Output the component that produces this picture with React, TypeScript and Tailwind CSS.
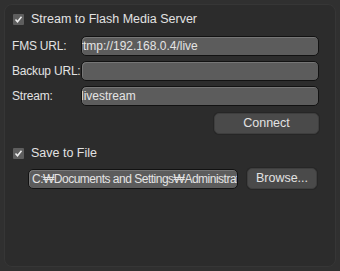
import React from 'react';

const font = { fontFamily: '"Liberation Sans", Arial, sans-serif' };

function Check({ label }: { label: string }) {
  return (
    <div className="flex items-center gap-[7px] h-[14px]">
      <div className="w-[11px] h-[11px] bg-[#5e5e5e] rounded-[1px] flex items-center justify-center">
        <svg width="9" height="9" viewBox="0 0 9 9">
          <path d="M1.5 4.5 L3.5 6.8 L7.5 1.8" stroke="#f0f0f0" strokeWidth="1.5" fill="none" />
        </svg>
      </div>
      <span className="text-[12.5px] text-[#e2e2e2] leading-none whitespace-nowrap">{label}</span>
    </div>
  );
}

function Field({ value, offset = 0, tight = false }: { value: string; offset?: number; tight?: boolean }) {
  return (
    <div className="h-[20px] w-full rounded-[5px] bg-[#5c5c5c] border border-[#121212] shadow-[inset_1px_1px_0_#767676] overflow-hidden flex items-center">
      <span
        className={`text-[12px] text-[#e4e4e4] whitespace-nowrap leading-none ${tight ? 'tracking-[-0.5px]' : ''}`}
        style={{ marginLeft: offset }}
      >
        {value}
      </span>
    </div>
  );
}

function Button({ label, w }: { label: string; w: string }) {
  return (
    <div
      className={`${w} h-[21px] shrink-0 rounded-[5px] bg-[#4a4a4a] border border-[#3e3e3e] shadow-[0_0_0_1px_#262626] flex items-center justify-center text-[12.5px] text-[#e2e2e2]`}
    >
      {label}
    </div>
  );
}

function Row({ label, value, offset }: { label: string; value: string; offset?: number }) {
  return (
    <div className="flex items-center">
      <span className="w-[69px] shrink-0 whitespace-nowrap text-[12px] tracking-[-0.2px] text-[#e2e2e2]">{label}</span>
      <div className="flex-1">
        <Field value={value} offset={offset} />
      </div>
    </div>
  );
}

export default function App() {
  return (
    <div className="w-[340px] h-[271px] bg-[#303030] p-[4px]" style={font}>
      <div className="h-full rounded-[8px] bg-[#2c2c2c] border border-[#363636] pl-[7px] pr-[16px] pt-[7px]">
        <div className="pl-[1px]">
          <Check label="Stream to Flash Media Server" />
        </div>
        <div className="mt-[10px] flex flex-col gap-[5px]">
          <Row label="FMS URL:" value="rtmp://192.168.0.4/live" offset={-3} />
          <Row label="Backup URL:" value="" />
          <Row label="Stream:" value="livestream" offset={-1} />
        </div>
        <div className="flex justify-end mt-[7px]">
          <Button label="Connect" w="w-[105px]" />
        </div>
        <div className="mt-[12px] pl-[1px]">
          <Check label="Save to File" />
        </div>
        <div className="mt-[8px] flex items-center pl-[16px] gap-[9px]">
          <div className="w-[210px] shrink-0">
            <Field value="C:₩Documents and Settings₩Administrat" offset={3} tight />
          </div>
          <Button label="Browse..." w="w-[70px]" />
        </div>
      </div>
    </div>
  );
}
